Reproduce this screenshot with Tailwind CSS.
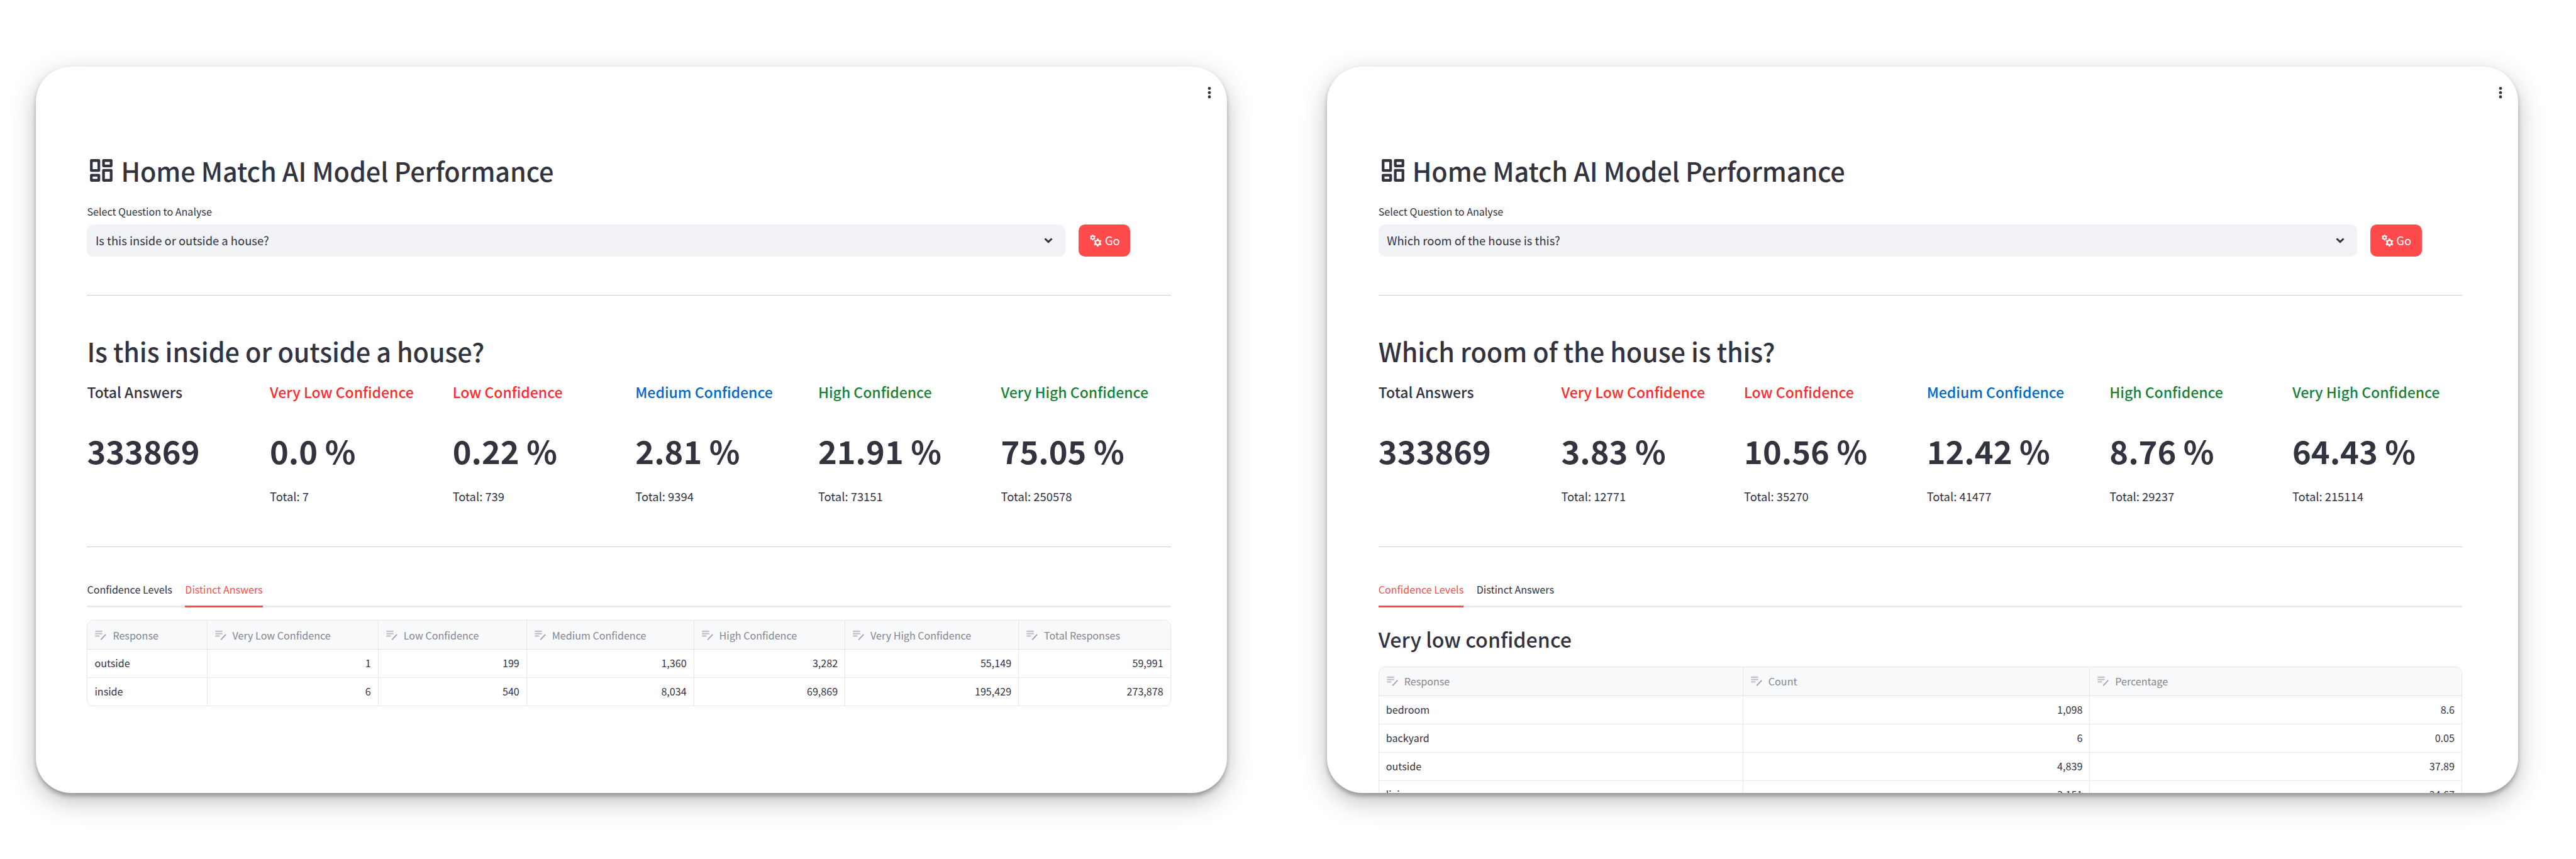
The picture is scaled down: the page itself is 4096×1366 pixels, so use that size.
<!DOCTYPE html>
<html lang="en">
<head>
<meta charset="utf-8">
<title>Home Match AI Model Performance</title>
<script src="https://cdn.jsdelivr.net/npm/@tailwindcss/browser@4"></script>
</head>
<body class="w-[4096px] h-[1366px] overflow-hidden bg-white font-['Noto_Sans_CJK_SC',sans-serif] text-[#31333f]">
<svg class="hidden">
  <symbol id="dash" viewBox="0 0 160 160"><g fill="none" stroke="currentColor" stroke-width="19" stroke-linejoin="round"><rect x="10" y="10" width="53" height="71"/><rect x="96" y="10" width="54" height="38"/><rect x="10" y="114" width="53" height="36"/><rect x="96" y="79" width="54" height="71"/></g></symbol>
  <symbol id="gears" viewBox="0 0 82 86"><g stroke="#fff"><path stroke-width="9" d="M20 1V41M2.700 11L37.300 31M37.300 11L2.700 31"/><path stroke-width="12" d="M55 29V85M30.800 43L79.200 71M79.200 43L30.800 71"/></g><circle cx="20" cy="21" r="15" fill="#fff"/><circle cx="20" cy="21" r="7" fill="#ff4b4b"/><circle cx="55" cy="57" r="21" fill="#fff"/><circle cx="55" cy="57" r="11" fill="#ff4b4b"/></symbol>
  <symbol id="edit" viewBox="0 0 80 72"><path fill="#bfc1c5" d="M1 3h51v10H1zM1 20h51v10H1zM1 37h32v10H1z"/><path stroke="#a4a6ab" stroke-width="9" d="M41 69L77 31"/></symbol>
</svg>
<main class="flex gap-[159.600px] pt-[105.500px] pl-[56.800px]">

<!-- Distinct answers view -->
<section class="w-[1893.800px] h-[1155.500px] shrink-0 overflow-hidden rounded-[56px] bg-white shadow-[0_5px_7px_rgba(0,0,0,0.28),0_13px_40px_rgba(0,0,0,0.25)] pl-[81.600px] pr-[89px]">
  <div class="h-[137px] pt-[32.500px] flex justify-end -mr-[64px]">
    <svg class="w-[6px] h-[19px]" viewBox="0 0 6 19" fill="#31333f"><circle cx="3" cy="2.600" r="2.400"/><circle cx="3" cy="9.300" r="2.400"/><circle cx="3" cy="16" r="2.400"/></svg>
  </div>
  <h1 class="flex items-center h-[56px] text-[41.400px] leading-[56px] font-medium tracking-[-0.100px]"><svg class="w-[36px] h-[36px] ml-[5px] mr-[13px]"><use href="#dash"/></svg><span>Home Match AI Model Performance</span></h1>
  <p class="mt-[25px] text-[16.100px] leading-[24px]">Select Question to Analyse</p>
  <div class="mt-[9px] flex gap-[21px]">
    <div class="flex w-[1556px] h-[51.400px] items-center justify-between rounded-[10px] bg-[#f0f2f6] pl-[13.500px] pr-[20px]"><span class="text-[18.400px] leading-[30px]">Is this inside or outside a house?</span><svg class="w-[14px] h-[9px]" viewBox="0 0 14 9" fill="none" stroke="#31333f" stroke-width="3"><path d="M1.500 1.500L7 6.700L12.500 1.500"/></svg></div>
    <div class="flex w-[82px] items-center rounded-[10px] bg-[#ff4b4b] pl-[18px] text-[18.400px] leading-[30px] text-white"><svg class="w-[18.500px] h-[19.400px] mr-[5px]"><use href="#gears"/></svg><span>Go</span></div>
  </div>
  <div class="mt-[61.600px] h-px bg-[#cdced1]"></div>
  <h2 class="mt-[60px] text-[41.400px] leading-[56px] font-medium tracking-[-0.120px]">Is this inside or outside a house?</h2>
  <div class="mt-[21.500px] grid grid-cols-6 gap-[20.600px] whitespace-nowrap">
    <div><h5 class="text-[23px] leading-[30px] font-medium">Total Answers</h5><p class="mt-[44.500px] text-[50.600px] leading-[68px] font-bold">333869</p></div>
    <div><h5 class="text-[23px] leading-[30px] font-medium text-[#ff2b2b]">Very Low Confidence</h5><p class="mt-[44.500px] text-[50.600px] leading-[68px] font-bold">0.0 %</p><p class="mt-[24px] text-[18.400px] leading-[30px]">Total: 7</p></div>
    <div><h5 class="text-[23px] leading-[30px] font-medium text-[#ff2b2b]">Low Confidence</h5><p class="mt-[44.500px] text-[50.600px] leading-[68px] font-bold">0.22 %</p><p class="mt-[24px] text-[18.400px] leading-[30px]">Total: 739</p></div>
    <div><h5 class="text-[23px] leading-[30px] font-medium text-[#0068c9]">Medium Confidence</h5><p class="mt-[44.500px] text-[50.600px] leading-[68px] font-bold">2.81 %</p><p class="mt-[24px] text-[18.400px] leading-[30px]">Total: 9394</p></div>
    <div><h5 class="text-[23px] leading-[30px] font-medium text-[#158237]">High Confidence</h5><p class="mt-[44.500px] text-[50.600px] leading-[68px] font-bold">21.91 %</p><p class="mt-[24px] text-[18.400px] leading-[30px]">Total: 73151</p></div>
    <div><h5 class="text-[23px] leading-[30px] font-medium text-[#158237]">Very High Confidence</h5><p class="mt-[44.500px] text-[50.600px] leading-[68px] font-bold">75.05 %</p><p class="mt-[24px] text-[18.400px] leading-[30px]">Total: 250578</p></div>
  </div>
  <div class="mt-[65px] h-px bg-[#cdced1]"></div>
  <div class="mt-[54.500px] flex h-[41.400px] gap-[20.500px] text-[16.100px] leading-[24px] shadow-[inset_0_-3px_0_#e9eaeb]"><span>Confidence Levels</span><span class="text-[#ff4b4b] shadow-[inset_0_-3px_0_#ff4b4b]">Distinct Answers</span></div>
  <div class="mt-[19.500px] overflow-hidden rounded-[10px] border border-[#e6e7e9] text-[16.100px] leading-[24px]">
    <div class="grid h-[46.500px] grid-cols-[190.200fr_272.400fr_236.100fr_265.900fr_240.600fr_276.100fr_240.600fr] divide-x divide-[#e6e7e9] border-b border-[#e0e2e4] bg-[#f8f9fb] text-[#85868e] *:flex *:items-center *:gap-[10px] *:pl-[12px]">
      <div><svg class="w-[18px] h-[16px]"><use href="#edit"/></svg><span>Response</span></div>
      <div><svg class="w-[18px] h-[16px]"><use href="#edit"/></svg><span>Very Low Confidence</span></div>
      <div><svg class="w-[18px] h-[16px]"><use href="#edit"/></svg><span>Low Confidence</span></div>
      <div><svg class="w-[18px] h-[16px]"><use href="#edit"/></svg><span>Medium Confidence</span></div>
      <div><svg class="w-[18px] h-[16px]"><use href="#edit"/></svg><span>High Confidence</span></div>
      <div><svg class="w-[18px] h-[16px]"><use href="#edit"/></svg><span>Very High Confidence</span></div>
      <div><svg class="w-[18px] h-[16px]"><use href="#edit"/></svg><span>Total Responses</span></div>
    </div>
    <div class="grid h-[45px] grid-cols-[190.200fr_272.400fr_236.100fr_265.900fr_240.600fr_276.100fr_240.600fr] divide-x divide-[#e6e7e9] border-b border-[#e6e7e9] text-right leading-[43px] *:px-[11px]">
      <div class="text-left">outside</div><div>1</div><div>199</div><div>1,360</div><div>3,282</div><div>55,149</div><div>59,991</div>
    </div>
    <div class="grid h-[44px] grid-cols-[190.200fr_272.400fr_236.100fr_265.900fr_240.600fr_276.100fr_240.600fr] divide-x divide-[#e6e7e9] text-right leading-[43px] *:px-[11px]">
      <div class="text-left">inside</div><div>6</div><div>540</div><div>8,034</div><div>69,869</div><div>195,429</div><div>273,878</div>
    </div>
  </div>
</section>

<!-- Confidence levels view -->
<section class="w-[1893.800px] h-[1155.500px] shrink-0 overflow-hidden rounded-[56px] bg-white shadow-[0_5px_7px_rgba(0,0,0,0.28),0_13px_40px_rgba(0,0,0,0.25)] pl-[81.600px] pr-[89px]">
  <div class="h-[137px] pt-[32.500px] flex justify-end -mr-[64px]">
    <svg class="w-[6px] h-[19px]" viewBox="0 0 6 19" fill="#31333f"><circle cx="3" cy="2.600" r="2.400"/><circle cx="3" cy="9.300" r="2.400"/><circle cx="3" cy="16" r="2.400"/></svg>
  </div>
  <h1 class="flex items-center h-[56px] text-[41.400px] leading-[56px] font-medium tracking-[-0.100px]"><svg class="w-[36px] h-[36px] ml-[5px] mr-[13px]"><use href="#dash"/></svg><span>Home Match AI Model Performance</span></h1>
  <p class="mt-[25px] text-[16.100px] leading-[24px]">Select Question to Analyse</p>
  <div class="mt-[9px] flex gap-[21px]">
    <div class="flex w-[1556px] h-[51.400px] items-center justify-between rounded-[10px] bg-[#f0f2f6] pl-[13.500px] pr-[20px]"><span class="text-[18.400px] leading-[30px]">Which room of the house is this?</span><svg class="w-[14px] h-[9px]" viewBox="0 0 14 9" fill="none" stroke="#31333f" stroke-width="3"><path d="M1.500 1.500L7 6.700L12.500 1.500"/></svg></div>
    <div class="flex w-[82px] items-center rounded-[10px] bg-[#ff4b4b] pl-[18px] text-[18.400px] leading-[30px] text-white"><svg class="w-[18.500px] h-[19.400px] mr-[5px]"><use href="#gears"/></svg><span>Go</span></div>
  </div>
  <div class="mt-[61.600px] h-px bg-[#cdced1]"></div>
  <h2 class="mt-[60px] text-[41.400px] leading-[56px] font-medium tracking-[-0.120px]">Which room of the house is this?</h2>
  <div class="mt-[21.500px] grid grid-cols-6 gap-[20.600px] whitespace-nowrap">
    <div><h5 class="text-[23px] leading-[30px] font-medium">Total Answers</h5><p class="mt-[44.500px] text-[50.600px] leading-[68px] font-bold">333869</p></div>
    <div><h5 class="text-[23px] leading-[30px] font-medium text-[#ff2b2b]">Very Low Confidence</h5><p class="mt-[44.500px] text-[50.600px] leading-[68px] font-bold">3.83 %</p><p class="mt-[24px] text-[18.400px] leading-[30px]">Total: 12771</p></div>
    <div><h5 class="text-[23px] leading-[30px] font-medium text-[#ff2b2b]">Low Confidence</h5><p class="mt-[44.500px] text-[50.600px] leading-[68px] font-bold">10.56 %</p><p class="mt-[24px] text-[18.400px] leading-[30px]">Total: 35270</p></div>
    <div><h5 class="text-[23px] leading-[30px] font-medium text-[#0068c9]">Medium Confidence</h5><p class="mt-[44.500px] text-[50.600px] leading-[68px] font-bold">12.42 %</p><p class="mt-[24px] text-[18.400px] leading-[30px]">Total: 41477</p></div>
    <div><h5 class="text-[23px] leading-[30px] font-medium text-[#158237]">High Confidence</h5><p class="mt-[44.500px] text-[50.600px] leading-[68px] font-bold">8.76 %</p><p class="mt-[24px] text-[18.400px] leading-[30px]">Total: 29237</p></div>
    <div><h5 class="text-[23px] leading-[30px] font-medium text-[#158237]">Very High Confidence</h5><p class="mt-[44.500px] text-[50.600px] leading-[68px] font-bold">64.43 %</p><p class="mt-[24px] text-[18.400px] leading-[30px]">Total: 215114</p></div>
  </div>
  <div class="mt-[65px] h-px bg-[#cdced1]"></div>
  <div class="mt-[54.500px] flex h-[41.400px] gap-[20.500px] text-[16.100px] leading-[24px] shadow-[inset_0_-3px_0_#e9eaeb]"><span class="text-[#ff4b4b] shadow-[inset_0_-3px_0_#ff4b4b]">Confidence Levels</span><span>Distinct Answers</span></div>
  <h3 class="mt-[29.500px] text-[32.200px] leading-[40px] font-medium">Very low confidence</h3>
  <div class="mt-[24px] overflow-hidden rounded-[10px] border border-[#e6e7e9] text-[16.100px] leading-[24px]">
    <div class="grid h-[46px] grid-cols-[579.100fr_551.500fr_590.700fr] divide-x divide-[#e6e7e9] border-b border-[#e0e2e4] bg-[#f8f9fb] text-[#85868e] *:flex *:items-center *:gap-[10px] *:pl-[12px]">
      <div><svg class="w-[18px] h-[16px]"><use href="#edit"/></svg><span>Response</span></div>
      <div><svg class="w-[18px] h-[16px]"><use href="#edit"/></svg><span>Count</span></div>
      <div><svg class="w-[18px] h-[16px]"><use href="#edit"/></svg><span>Percentage</span></div>
    </div>
    <div class="grid h-[45px] grid-cols-[579.100fr_551.500fr_590.700fr] divide-x divide-[#e6e7e9] border-b border-[#e6e7e9] text-right leading-[43px] *:px-[11px]"><div class="text-left">bedroom</div><div>1,098</div><div>8.6</div></div>
    <div class="grid h-[45px] grid-cols-[579.100fr_551.500fr_590.700fr] divide-x divide-[#e6e7e9] border-b border-[#e6e7e9] text-right leading-[43px] *:px-[11px]"><div class="text-left">backyard</div><div>6</div><div>0.05</div></div>
    <div class="grid h-[45px] grid-cols-[579.100fr_551.500fr_590.700fr] divide-x divide-[#e6e7e9] border-b border-[#e6e7e9] text-right leading-[43px] *:px-[11px]"><div class="text-left">outside</div><div>4,839</div><div>37.89</div></div>
    <div class="grid h-[45px] grid-cols-[579.100fr_551.500fr_590.700fr] divide-x divide-[#e6e7e9] border-b border-[#e6e7e9] text-right leading-[43px] *:px-[11px]"><div class="text-left">living</div><div>3,151</div><div>24.67</div></div>
  </div>
</section>
</main>
</body>
</html>
